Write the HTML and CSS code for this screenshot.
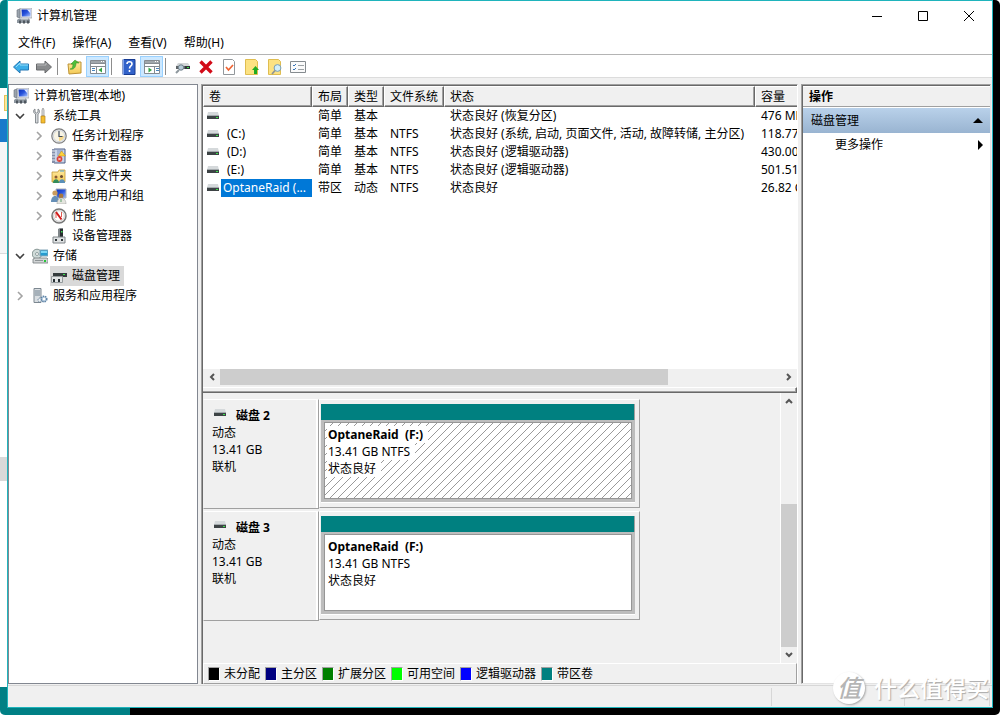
FILE: index.html
```html
<!DOCTYPE html>
<html lang="zh-CN">
<head>
<meta charset="utf-8">
<title>计算机管理</title>
<link rel="stylesheet" href="styles.css">
</head>
<body>
<svg class="defs" aria-hidden="true">
  <defs>
    <linearGradient id="blue" x1="0" y1="0" x2="1" y2="1"><stop offset="0" stop-color="#0a2fb8"/><stop offset=".5" stop-color="#2a55dd"/><stop offset="1" stop-color="#a9c4ff"/></linearGradient>
    <linearGradient id="gold" x1="0" y1="0" x2="0" y2="1"><stop offset="0" stop-color="#ffe9a0"/><stop offset="1" stop-color="#f3ca55"/></linearGradient>
    <pattern id="hatch" width="8" height="8" patternUnits="userSpaceOnUse">
      <path d="M7 0h1v1H7zM6 1h1v1H6zM5 2h1v1H5zM4 3h1v1H4zM3 4h1v1H3zM2 5h1v1H2zM1 6h1v1H1zM0 7h1v1H0z" fill="#9a9a9a"/>
    </pattern>
    <symbol id="computer" viewBox="0 0 16 16">
      <path d="M1 2l3-1v9l-3-1z" fill="#9aa3ad" stroke="#68717b" stroke-width=".6"/>
      <path d="M4 0h12v10H5z" fill="#e4e6ea" stroke="#8b919a" stroke-width=".6"/>
      <path d="M5.500 1.500h9v7h-8.500z" fill="url(#blue)"/><path d="M11 1.500h3.500v4z" fill="#dfe9ff"/>
      <path d="M1 12l2-1.500h10l1 1.500v3H1z" fill="#8d969f"/><path d="M3 12.500h2v3H3zM7 12.500h2v3H7zM11 12.500h2v3h-2z" fill="#4e565e"/><path d="M5 10h7v1.500H5z" fill="#cfd4d8"/>
    </symbol>
    <symbol id="tools" viewBox="0 0 16 16">
      <path d="M3 1v3l1.500 1L6 4V1c2 1 2 4 0 5v9H3.500V6C1 5 1 2 3 1z" fill="#d7dadd" stroke="#70767c" stroke-width=".8"/>
      <path d="M10 2l1-2 1 2v6h-2z" fill="#e5e5e5" stroke="#8a8a8a" stroke-width=".7"/>
      <path d="M9 8h4v7H9z" fill="#f5bd2e" stroke="#b6811a" stroke-width=".7"/>
    </symbol>
    <symbol id="clock" viewBox="0 0 16 16">
      <circle cx="8" cy="8" r="7.200" fill="#e9edf2" stroke="#7d7d7d" stroke-width="1.200"/>
      <circle cx="8" cy="8" r="5.600" fill="#f8f4e4" stroke="#bfc5cb" stroke-width=".6"/><path d="M8 8h5A5 5 0 0 1 8 13z" fill="#f6d98e"/>
      <path d="M8 3v5.500h3.500" fill="none" stroke="#3e4a5c" stroke-width="1.200"/>
    </symbol>
    <symbol id="events" viewBox="0 0 16 16">
      <path d="M3 1h11v14H3z" fill="#c9d5ea" stroke="#4e5e86"/><path d="M1 1h3v14H1z" fill="#8590aa"/><path d="M1 3h3M1 6h3M1 9h3M1 12h3" stroke="#e3e8f2"/>
      <path d="M6 3h6M6 5h4M6 7h2" stroke="#7a8ebc"/><path d="M10.500 3l4 5h-7z" fill="#ffd23c" stroke="#c49000" stroke-width=".5"/><circle cx="8.500" cy="11" r="2.900" fill="#dc4136"/><path d="M7.300 9.800l2.400 2.400m0-2.400l-2.400 2.400" stroke="#fff" stroke-width=".8"/>
    </symbol>
    <symbol id="shared" viewBox="0 0 16 16">
      <path d="M1 4h6l1-2h6v12H1z" fill="url(#gold)" stroke="#c29b35" stroke-width=".8"/><path d="M9 3h4" stroke="#4da3d8"/>
      <circle cx="5" cy="9" r="1.500" fill="#8a5b33"/><path d="M2 15c0-5 6-5 6 0z" fill="#348c5b"/><circle cx="10.500" cy="8.500" r="1.500" fill="#6b4a33"/><path d="M8 15c0-5 6-5 6 0z" fill="#5a8fb8"/>
    </symbol>
    <symbol id="users" viewBox="0 0 16 16">
      <path d="M5 1h10v9H6z" fill="url(#blue)" stroke="#a9afb7"/>
      <circle cx="4" cy="5" r="2.600" fill="#c99b5c"/><path d="M0 14c0-8 8-8 8 0z" fill="#668fb7"/>
      <circle cx="10" cy="8" r="2.400" fill="#a9773c"/><path d="M6 16c0-8 9-8 9 0z" fill="#e5e5df" stroke="#989898" stroke-width=".5"/><path d="M10 11v3" stroke="#58a06a"/>
    </symbol>
    <symbol id="performance" viewBox="0 0 16 16">
      <circle cx="8" cy="8" r="7" fill="#f8f8f8" stroke="#777" stroke-width="1.500"/><circle cx="8" cy="8" r="5.300" fill="#fff" stroke="#b8b8b8" stroke-width=".7"/>
      <path d="M5 5v5M10.500 4v5" stroke="#e15b50"/><path d="M5 4l5.500 7.500" stroke="#d01919" stroke-width="2"/>
    </symbol>
    <symbol id="devices" viewBox="0 0 16 16">
      <path d="M7 1l2-1h3v9H7z" fill="#81878a"/><path d="M9 1h3v8H9z" fill="#292d30"/><path d="M10 3h1.500v1.500H10z" fill="#46e65d"/>
      <path d="M2 9h12v6H2z" fill="#dfe2e3" stroke="#80868a"/><path d="M4 11h2v2H4zM10 11h2v2h-2z" fill="#30363a"/>
    </symbol>
    <symbol id="storage" viewBox="0 0 16 16">
      <circle cx="5" cy="6" r="4.800" fill="#d0dbd9" stroke="#849492"/><circle cx="5" cy="6" r="1.500" fill="#fff" stroke="#8fa0a0"/>
      <path d="M8 2h8v6H8z" fill="#269bcf" stroke="#85a6b8"/><path d="M9 3h6v2H9z" fill="#7dd7f5"/><path d="M1 11l2-1h12l1 1v4H1z" fill="#d2d5d6" stroke="#757b7e" stroke-width=".8"/><path d="M3 12h8v1H3z" fill="#8e9496"/><path d="M12 12h2v2h-2z" fill="#28c63a"/>
    </symbol>
    <symbol id="disks" viewBox="0 0 16 16">
      <path d="M4 2h11l1 3H2z" fill="#d7dadb"/><path d="M2 5h14v4H2z" fill="#343b3d"/><path d="M12 6h2v1h-2z" fill="#39e34c"/>
      <path d="M.500 8.500h11v6H.500z" fill="#e1e4e5" stroke="#959b9d"/><path d="M2 11h2v3H2zM7 11h2v3H7z" fill="#252c30"/>
    </symbol>
    <symbol id="services" viewBox="0 0 16 16">
      <path d="M2 .500h7v14H2z" fill="#d9dee2" stroke="#7c8790"/><path d="M3 3h5M3 5h5M3 7h5" stroke="#728391"/>
      <circle cx="8" cy="12" r="2" fill="#eef1f4" stroke="#69839b" stroke-dasharray="1.200 .6"/><circle cx="12" cy="11" r="2.800" fill="#b9cee0" stroke="#5e83a6" stroke-width="1.500" stroke-dasharray="1.500 .8"/><circle cx="12" cy="11" r="1.200" fill="#fff"/>
    </symbol>
    <symbol id="drive" viewBox="0 0 14 8">
      <path d="M2 0h10l1 4H1z" fill="#d5d9db"/><path d="M1 4h12v3H1z" fill="#3d4345"/><path d="M1 3h12v1H1z" fill="#a5abae"/><path d="M10 5h2v1h-2z" fill="#3de34b"/>
    </symbol>
    <symbol id="open" viewBox="0 0 10 10"><path d="M1 3l4 4 4-4" fill="none" stroke="#404040" stroke-width="1.600"/></symbol>
    <symbol id="closed" viewBox="0 0 10 10"><path d="M3 1l4 4-4 4" fill="none" stroke="#a3a3a3" stroke-width="1.600"/></symbol>
    <symbol id="thick" viewBox="0 0 8 8"><path d="M1 6l3-3 3 3" fill="none" stroke="#555" stroke-width="2"/></symbol>
  </defs>
</svg>
<div class="desktop">
  <div class="behind">
    <div class="behind-top"></div><div class="behind-bar"><i></i></div><div class="behind-blue"></div><div class="behind-nav"></div><div class="behind-blank"></div><div class="behind-selected"></div><div class="behind-page"></div><div class="behind-bottom"></div>
  </div>
  <div class="window">
    <header class="titlebar">
      <svg class="icon"><use href="#computer"/></svg><h1>计算机管理</h1>
      <div class="caption-buttons">
        <button aria-label="最小化"><svg width="12" height="12"><path d="M1 6.500h10" stroke="#000"/></svg></button>
        <button aria-label="最大化"><svg width="12" height="12"><path d="M1.500 1.500h9v9h-9z" fill="none" stroke="#000"/></svg></button>
        <button aria-label="关闭"><svg width="12" height="12"><path d="M1 1l10 10M11 1L1 11" stroke="#000"/></svg></button>
      </div>
    </header>
    <nav class="menubar"><button>文件(F)</button><button>操作(A)</button><button>查看(V)</button><button>帮助(H)</button></nav>
    <div class="toolbar">
      <button aria-label="后退"><svg class="icon" viewBox="0 0 16 16"><path d="M.500 8L7 2v3h8.500v6H7v3z" fill="#3caee8" stroke="#2377b4"/><path d="M3 8l4-4v2h8" fill="none" stroke="#95ddfa"/></svg></button>
      <button aria-label="前进"><svg class="icon" viewBox="0 0 16 16"><path d="M15.500 8L9 2v3H.500v6H9v3z" fill="#898b8d" stroke="#686a6c"/><path d="M1 6h9V4" fill="none" stroke="#b9babc"/></svg></button>
      <i></i>
      <button aria-label="向上"><svg class="icon" viewBox="0 0 16 16"><path d="M1 5h5l1-2h7v11l-12 1z" fill="url(#gold)" stroke="#bd9235"/><path d="M3 10c2 0 3-2 3-5H4l4-4 4 3H9c0 5-3 7-6 6z" fill="#4fbe3a" stroke="#2b8e25" stroke-width=".5"/></svg></button>
      <button class="on" aria-label="显示控制台树"><svg class="icon" viewBox="0 0 16 16"><path d="M.500 1.500h15v13H.500zM1 4.500h14M1 7.500h14M6.500 8v6" fill="#fff" stroke="#858b91"/><path d="M1 2h14v2H1z" fill="#a1a7ac"/><path d="M11 2.500h1m1 0h1" stroke="#fff"/><path d="M2 9.500h3m-3 2h3" stroke="#4884bc"/><path d="M12 8.500v5L8.500 11z" fill="#31a542"/></svg></button>
      <i></i>
      <button aria-label="帮助"><svg class="icon" viewBox="0 0 16 16"><path d="M2 .500h12v15H2z" fill="#3262c9" stroke="#173b91"/><path d="M2.500 0v16" stroke="#7ea0e9"/><path d="M6 5c0-3 5-3 5 0 0 2-2.500 2-2.500 4.500M8.500 11v2" fill="none" stroke="#fff" stroke-width="1.600"/></svg></button>
      <button class="on" aria-label="显示操作窗格"><svg class="icon" viewBox="0 0 16 16"><path d="M.500 1.500h15v13H.500zM1 4.500h14M1 7.500h14M10.500 8v6" fill="#fff" stroke="#858b91"/><path d="M1 2h14v2H1z" fill="#a1a7ac"/><path d="M11 2.500h1m1 0h1" stroke="#fff"/><path d="M12 9.500h3m-3 2h3" stroke="#4884bc"/><path d="M4.500 8.500v5L8 11z" fill="#31a542"/></svg></button>
      <i></i>
      <button aria-label="属性"><svg class="icon" viewBox="0 0 16 16"><path d="M3 4h10l2 3H1z" fill="#d3d6d8"/><path d="M1 7h14v3H1z" fill="#5d6366"/><path d="M10 7h5v3h-5z" fill="#303638"/><path d="M12 8h2v1h-2z" fill="#3de34b"/><circle cx="6" cy="8.500" r="2.700" fill="#b7cbd8" stroke="#6d7d88"/><path d="M4 11l-3 3" stroke="#8e989e" stroke-width="2"/></svg></button>
      <button aria-label="删除"><svg class="icon" viewBox="0 0 16 16"><path d="M2.500 2.500l11 11M13.500 2.500l-11 11" stroke="#d20b18" stroke-width="3.400"/></svg></button>
      <button aria-label="检查"><svg class="icon" viewBox="0 0 16 16"><path d="M2.500.500h9l2 2v13h-11z" fill="#fff" stroke="#92979b"/><path d="M5 8l2.500 3L12 6" fill="none" stroke="#ef6433" stroke-width="1.700"/></svg></button>
      <button aria-label="上移"><svg class="icon" viewBox="0 0 16 16"><path d="M1.500.500h10l2 2v13h-12z" fill="#fce282" stroke="#dfbd50"/><path d="M10 15v-4H8l3.500-4 3.500 4h-2v4z" fill="#1fac20"/></svg></button>
      <button aria-label="查找"><svg class="icon" viewBox="0 0 16 16"><path d="M1.500.500h10l2 2v13h-12z" fill="#fce282" stroke="#dfbd50"/><circle cx="10.500" cy="9" r="3.400" fill="#d2effa" stroke="#7a9eb1"/><path d="M8 11.500L5 15" stroke="#8e9496" stroke-width="1.700"/></svg></button>
      <button aria-label="列表"><svg class="icon" viewBox="0 0 16 16"><path d="M.500 2.500h15v11H.500z" fill="#fafafa" stroke="#858b8f"/><path d="M3 6l1 1 2-2M3 10l1 1 2-2" fill="none" stroke="#3774b7"/><path d="M8 6.500h6m-6 4h6" stroke="#9ca2a5"/></svg></button>
    </div>
    <main class="panes">
      <aside class="tree">
        <a class="node root" href="#root"><svg class="icon"><use href="#computer"/></svg><span>计算机管理(本地)</span></a>
        <a class="node" href="#system"><svg class="chevron"><use href="#open"/></svg><svg class="icon"><use href="#tools"/></svg><span>系统工具</span></a>
        <a class="node child" href="#tasks"><svg class="chevron"><use href="#closed"/></svg><svg class="icon"><use href="#clock"/></svg><span>任务计划程序</span></a>
        <a class="node child" href="#events-view"><svg class="chevron"><use href="#closed"/></svg><svg class="icon"><use href="#events"/></svg><span>事件查看器</span></a>
        <a class="node child" href="#shares"><svg class="chevron"><use href="#closed"/></svg><svg class="icon"><use href="#shared"/></svg><span>共享文件夹</span></a>
        <a class="node child" href="#groups"><svg class="chevron"><use href="#closed"/></svg><svg class="icon"><use href="#users"/></svg><span>本地用户和组</span></a>
        <a class="node child" href="#perf"><svg class="chevron"><use href="#closed"/></svg><svg class="icon"><use href="#performance"/></svg><span>性能</span></a>
        <a class="node child" href="#device-manager"><svg class="chevron"></svg><svg class="icon"><use href="#devices"/></svg><span>设备管理器</span></a>
        <a class="node" href="#storage-root"><svg class="chevron"><use href="#open"/></svg><svg class="icon"><use href="#storage"/></svg><span>存储</span></a>
        <a class="node child current" href="#disk-manager"><svg class="chevron"></svg><b><svg class="icon"><use href="#disks"/></svg><span>磁盘管理</span></b></a>
        <a class="node" href="#services-root"><svg class="chevron"><use href="#closed"/></svg><svg class="icon"><use href="#services"/></svg><span>服务和应用程序</span></a>
      </aside>
      <section class="content">
        <div class="volumes">
          <div class="volume-list">
            <table>
              <colgroup><col class="c-volume"><col class="c-short"><col class="c-short"><col class="c-fs"><col class="c-status"><col></colgroup>
              <thead><tr><th>卷</th><th>布局</th><th>类型</th><th>文件系统</th><th>状态</th><th>容量</th></tr></thead>
              <tbody>
                <tr><td><div class="vol"><svg class="drive"><use href="#drive"/></svg></div></td><td>简单</td><td>基本</td><td></td><td>状态良好 (恢复分区)</td><td>476 MB</td></tr>
                <tr><td><div class="vol"><svg class="drive"><use href="#drive"/></svg><span>(C:)</span></div></td><td>简单</td><td>基本</td><td>NTFS</td><td>状态良好 (系统, 启动, 页面文件, 活动, 故障转储, 主分区)</td><td>118.77 GB</td></tr>
                <tr><td><div class="vol"><svg class="drive"><use href="#drive"/></svg><span>(D:)</span></div></td><td>简单</td><td>基本</td><td>NTFS</td><td>状态良好 (逻辑驱动器)</td><td>430.00 GB</td></tr>
                <tr><td><div class="vol"><svg class="drive"><use href="#drive"/></svg><span>(E:)</span></div></td><td>简单</td><td>基本</td><td>NTFS</td><td>状态良好 (逻辑驱动器)</td><td>501.51 GB</td></tr>
                <tr><td><div class="vol"><svg class="drive"><use href="#drive"/></svg><span class="picked">OptaneRaid (...</span></div></td><td>带区</td><td>动态</td><td>NTFS</td><td>状态良好</td><td>26.82 GB</td></tr>
              </tbody>
            </table>
          </div>
          <div class="hscroll"><button aria-label="向左滚动"><svg class="arrow left"><use href="#thick"/></svg></button><div class="htrack"><div class="hthumb"></div></div><button aria-label="向右滚动"><svg class="arrow right"><use href="#thick"/></svg></button></div>
          <div class="splitter"></div>
        </div>
        <div class="graph">
          <div class="disks">
            <article class="disk">
              <div class="disk-info"><h2><svg class="drive"><use href="#drive"/></svg>磁盘 2</h2><p>动态</p><p>13.41 GB</p><p>联机</p></div>
              <div class="disk-map"><div class="stripe"></div><div class="part"><div class="part-body"><svg class="hatch"><rect width="100%" height="100%" fill="url(#hatch)"/></svg><strong>OptaneRaid &nbsp;(F:)</strong><span>13.41 GB NTFS</span><span>状态良好</span></div></div></div>
            </article>
            <article class="disk">
              <div class="disk-info"><h2><svg class="drive"><use href="#drive"/></svg>磁盘 3</h2><p>动态</p><p>13.41 GB</p><p>联机</p></div>
              <div class="disk-map"><div class="stripe"></div><div class="part"><div class="part-body"><strong>OptaneRaid &nbsp;(F:)</strong><span>13.41 GB NTFS</span><span>状态良好</span></div></div></div>
            </article>
          </div>
          <div class="vscroll"><button aria-label="向上滚动"><svg class="arrow"><use href="#thick"/></svg></button><div class="vtrack"><div class="vthumb"></div></div><button aria-label="向下滚动"><svg class="arrow down"><use href="#thick"/></svg></button></div>
        </div>
        <div class="legend"><span><i class="k-black"></i>未分配</span><span><i class="k-navy"></i>主分区</span><span><i class="k-green"></i>扩展分区</span><span><i class="k-lime"></i>可用空间</span><span><i class="k-blue"></i>逻辑驱动器</span><span><i class="k-teal"></i>带区卷</span></div>
      </section>
      <aside class="actions">
        <h2>操作</h2>
        <button class="group">磁盘管理<svg width="10" height="5"><path d="M5 0l5 5H0z"/></svg></button>
        <button class="more">更多操作<svg width="5" height="10"><path d="M0 0l5 5-5 5z"/></svg></button>
      </aside>
    </main>
    <footer class="status"><div></div><div></div><div></div></footer>
  </div>
  <div class="watermark"><b>值</b><span>什么值得买</span></div>
</div>
</body>
</html>
```
FILE: styles.css
```css
* { box-sizing: border-box; }
html { background: #fff; }
body { margin: 0; color: #000; font: 12px/16px "Noto Sans", "Noto Sans CJK SC", sans-serif; }
h1, h2, p { margin: 0; font-size: 12px; font-weight: 400; }
a { color: inherit; text-decoration: none; }
svg { display: block; flex: none; }
button { display: flex; align-items: center; justify-content: center; margin: 0; padding: 0; border: 0; background: none; color: inherit; font: inherit; }
.defs { position: absolute; width: 0; height: 0; }
.icon { width: 16px; height: 16px; }
.drive { width: 14px; height: 8px; }

.desktop { position: relative; display: grid; grid-template-columns: 7px 1fr; height: 100vh; padding: 0 7px 7px 0; border-radius: 5px; overflow: hidden; background: linear-gradient(90deg, #008085 130px, #000 130px); }
.behind { display: flex; flex-direction: column; background: #fff; margin-bottom: -7px; }
.behind-top { height: 88px; background: #008085; }
.behind-bar { height: 31px; padding: 7px 0 0 4px; }
.behind-bar i { display: block; width: 3px; height: 16px; border: 1px solid #e5c35a; border-right: 0; background: #ffe699; }
.behind-blue { height: 23px; background: #1979ca; }
.behind-nav { height: 112px; background: #f5f6f7; border-bottom: 1px solid #dadbdc; }
.behind-blank { height: 203px; }
.behind-selected { height: 24px; background: #d9d9d9; }
.behind-page { flex: 1; }
.behind-bottom { height: 28px; background: #008085; }

.window { display: flex; flex-direction: column; min-width: 0; border: 1px solid #1fb4bc; background: #f0f0f0; }
.titlebar { display: flex; align-items: center; height: 30px; padding-left: 8px; gap: 5px; background: #fff; }
.caption-buttons { display: flex; margin-left: auto; }
.caption-buttons button { width: 46px; height: 30px; }
.menubar { display: flex; height: 23px; padding-left: 2px; gap: 1px; background: #fff; }
.menubar button { padding: 0 8px; }
.toolbar { display: flex; height: 24px; padding: 1px 0 0 1px; border-top: 1px solid #b4b4b4; border-bottom: 1px solid #dcdcdc; background: #fff; }
.toolbar button { width: 23px; height: 22px; }
.toolbar .on { height: 21px; border: 1px solid #99d1ff; background: #cce8ff; }
.toolbar i { width: 1px; margin: 2px 5px 2px 2px; background: #8d8d8d; }

.panes { flex: 1; display: grid; grid-template-columns: 190px minmax(0, 1fr) 190px; gap: 3px; padding: 6px 1px 1px 0; min-height: 0; }
.tree { padding-top: 1px; border: 1px solid #828790; background: #fff; }
.node { display: flex; align-items: center; height: 20px; padding-left: 6px; gap: 5px; }
.root { padding-left: 4px; }
.child { padding-left: 25px; }
.node b { display: flex; gap: 5px; align-items: center; height: 20px; margin-left: -1px; padding: 0 4px 0 1px; background: #d9d9d9; font-weight: 400; }
.chevron { width: 10px; height: 10px; margin-right: 2px; }

.content { display: flex; flex-direction: column; min-width: 0; border: 1px solid; border-width: 1px 1px 0; border-color: #a0a0a0 #fff #fff #a0a0a0; box-shadow: inset 1px 1px #696969; padding: 1px 0 0 1px; }
.volumes { flex: 307 1 0; display: flex; flex-direction: column; min-height: 0; }
.volume-list { flex: 1; overflow: hidden; background: #fff; }
table { width: 740px; table-layout: fixed; border-collapse: separate; border-spacing: 0; }
.c-volume { width: 109px; }
.c-short { width: 36px; }
.c-fs { width: 60px; }
.c-status { width: 311px; }
th { height: 21px; padding: 0 5px; border: 1px solid; border-color: #fff #696969 #696969 #fff; box-shadow: inset -1px -1px #a0a0a0; background: #f0f0f0; text-align: left; font-weight: 400; white-space: nowrap; }
td { height: 18px; padding: 0 6px; line-height: 18px; white-space: nowrap; }
td:first-child { padding: 0 0 0 3px; }
.vol { display: flex; align-items: center; height: 18px; gap: 1px; }
.vol span { padding-left: 6px; }
.vol .picked { flex: 1; padding-left: 2px; background: #0078d7; color: #fff; }
.hscroll { display: flex; height: 18px; padding-bottom: 2px; background: #f0f0f0; }
.hscroll button { width: 17px; height: 16px; }
.htrack { flex: 1; }
.hthumb { width: 80%; height: 16px; background: #cdcdcd; }
.arrow { width: 8px; height: 8px; }
.left { transform: rotate(-90deg); }
.right { transform: rotate(90deg); }
.down { transform: rotate(180deg); }
.splitter { height: 6px; border: solid; border-width: 1px 1px 1px 0; border-color: #fff #696969 #696969 #fff; box-shadow: inset -1px -1px #a0a0a0; }
.graph { flex: 270 1 0; display: flex; min-height: 0; }
.disks { flex: 1; display: flex; flex-direction: column; gap: 2px; padding-top: 6px; overflow: hidden; }
.disk { display: flex; height: 110px; }
.disk-info { width: 116px; padding: 7px 8px; border: 1px solid; border-color: #fff #a0a0a0 #a0a0a0 #f0f0f0; box-shadow: inset -2px 0 #fff; }
.disk-info h2, strong { font-weight: 700; }
.disk-info h2 { display: flex; gap: 9px; height: 17px; line-height: 17px; padding-left: 1px; }
.disk-info .drive { margin-top: 2px; }
.disk-info p { line-height: 17px; }
.disk-map { display: flex; flex-direction: column; width: 321px; height: 109px; padding: 4px 4px 4px 1px; border: 1px solid; border-color: #fff #a0a0a0 #a0a0a0 #fff; }
.stripe { height: 16px; border-right: 1px solid #a0a0a0; background: #008080; }
.part { flex: 1; padding: 2px 3px 3px; border-bottom: 1px solid #fff; background: #bdbdbd; }
.part-body { position: relative; display: flex; flex-direction: column; align-items: flex-start; height: 100%; padding: 3px 2px; border: 1px solid #969696; background: #fff; line-height: 17px; }
.part-body strong, .part-body span { position: relative; padding: 0 5px 0 1px; background: #fff; }
.hatch { position: absolute; inset: 0; width: 100%; height: 100%; }
.vscroll { display: flex; flex-direction: column; width: 17px; border-left: 1px solid #fff; }
.vscroll button { width: 16px; height: 16px; }
.vtrack { flex: 1; display: flex; flex-direction: column; justify-content: flex-end; }
.vthumb { height: 60%; background: #cdcdcd; }
.legend { display: flex; align-items: center; gap: 5px; height: 21px; padding-left: 4px; border: 1px solid; border-color: #fff #a0a0a0 #a0a0a0 #fff; }
.legend span { display: flex; align-items: center; gap: 4px; white-space: nowrap; }
.legend i { width: 12px; height: 14px; border: 1px solid; border-color: #a0a0a0 #fff #fff #a0a0a0; }
.k-black { background: #000; }
.k-navy { background: #000080; }
.k-green { background: #008000; }
.k-lime { background: #0f0; }
.k-blue { background: #00f; }
.k-teal { background: #008080; }

.actions { border: 1px solid; border-color: #a0a0a0 #e3e3e3 #e3e3e3 #a0a0a0; box-shadow: inset 1px 1px #696969; padding: 2px 0 0 1px; background: #fff; }
.actions h2 { height: 20px; padding-left: 6px; border-bottom: 1px solid #a0a0a0; background: #f0f0f0; font-weight: 700; line-height: 19px; }
.actions button { justify-content: space-between; width: 100%; height: 25px; padding: 0 7px 0 8px; }
.actions .group { margin-top: 1px; background: linear-gradient(#b9d1ea, #99b4d1); }
.actions .more { height: 24px; padding-left: 32px; }
.status { display: grid; grid-template-columns: 1fr 133px 85px; height: 22px; padding: 2px 2px 1px 0; border-top: 1px solid #d7d7d7; }
.status div { border-right: 1px solid #d7d7d7; }

.watermark { position: absolute; right: 11px; bottom: 11px; display: flex; align-items: center; gap: 9px; color: #fff; font-size: 23px; line-height: 32px; font-weight: 500; text-shadow: 1px 1px 1px #aaa; }
.watermark b { width: 32px; height: 32px; border-radius: 50%; background: #fff; color: #b5b5b5; font-size: 24px; font-style: italic; font-weight: 500; text-align: center; text-shadow: none; box-shadow: 1px 1px 2px #aaa; }
```
